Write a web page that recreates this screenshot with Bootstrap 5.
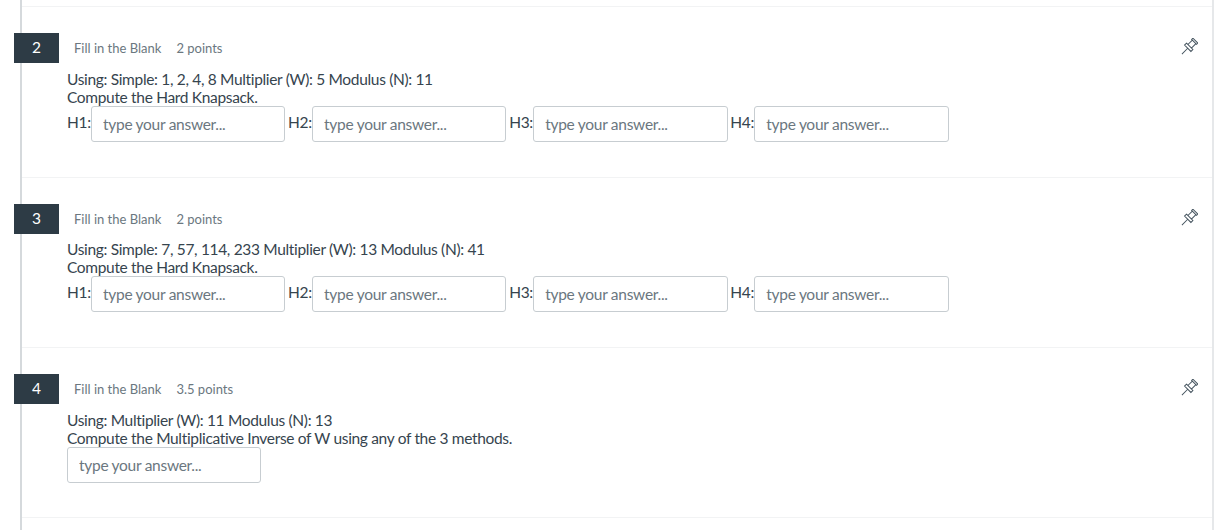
<!doctype html>
<html lang="en"><head><meta charset="utf-8"><title>Quiz</title>
<link href="https://cdn.jsdelivr.net/npm/bootstrap@5.3.0/dist/css/bootstrap.min.css" rel="stylesheet">
<style>
html,body{height:530px;overflow:hidden;background:#fff}
body{font-family:Lato,sans-serif;font-size:16px;color:#36444e}
.quiz-frame{margin-left:20px;margin-right:9px;height:530px;border-left:2px solid #d5d9dc;border-right:2px solid #e6e8ea}
.quiz-top{height:7px;border-bottom:1px solid #f2f3f4}
.quiz-item{height:170px;border-bottom:1px solid #f2f3f4;padding-top:26px}
.quiz-item:first-of-type{height:171px}
.quiz-num{width:45px;height:30px;margin-left:-8px;background:#2d3b45;color:#fff;font-size:15.5px}
.quiz-meta{font-size:13px;color:#6b7780;margin-left:15px;gap:15px;padding-top:2px}
.quiz-pin{margin-right:14px;margin-top:-2px}
.quiz-body{margin-left:45px;margin-top:7px;line-height:18px;font-size:15.5px;letter-spacing:-.33px}
.quiz-body-tight{margin-top:6px}
.quiz-label{width:24px;padding-top:7px;white-space:nowrap}
.quiz-input{width:194.35px;height:36px;padding:0 11px;margin-right:2.75px;font-family:Lato,sans-serif;font-size:15.5px;letter-spacing:-.28px;color:#2d3b45;border:1px solid #c7cdd1;border-radius:3px}
.quiz-input::placeholder{color:#6b7780;opacity:1}
</style></head><body>
<main class="quiz-frame">
<div class="quiz-top"></div>

<section class="quiz-item">
<div class="d-flex align-items-center">
<div class="quiz-num d-flex align-items-center justify-content-center">2</div>
<div class="quiz-meta d-flex"><span>Fill in the Blank</span><span>2 points</span></div>
<svg class="quiz-pin ms-auto" width="18" height="18" viewBox="-1 -1 18 18" fill="none" stroke="#44535e" stroke-width=".95" aria-hidden="true"><g transform="rotate(45 8 8)"><path d="M4.5-1h7v1.8h-7zM5.5.8h5V7h-5zM3.5 7h9v2.8h-9zM8 9.8V18"/></g></svg>
</div>
<div class="quiz-body">
<div>Using: Simple: 1, 2, 4, 8 Multiplier (W): 5 Modulus (N): 11</div>
<div>Compute the Hard Knapsack.</div>
<div class="d-flex">
<span class="quiz-label">H1:</span><input class="quiz-input form-control" placeholder="type your answer...">
<span class="quiz-label">H2:</span><input class="quiz-input form-control" placeholder="type your answer...">
<span class="quiz-label">H3:</span><input class="quiz-input form-control" placeholder="type your answer...">
<span class="quiz-label">H4:</span><input class="quiz-input form-control" placeholder="type your answer...">
</div></div>
</section>

<section class="quiz-item">
<div class="d-flex align-items-center">
<div class="quiz-num d-flex align-items-center justify-content-center">3</div>
<div class="quiz-meta d-flex"><span>Fill in the Blank</span><span>2 points</span></div>
<svg class="quiz-pin ms-auto" width="18" height="18" viewBox="-1 -1 18 18" fill="none" stroke="#44535e" stroke-width=".95" aria-hidden="true"><g transform="rotate(45 8 8)"><path d="M4.5-1h7v1.8h-7zM5.5.8h5V7h-5zM3.5 7h9v2.8h-9zM8 9.8V18"/></g></svg>
</div>
<div class="quiz-body quiz-body-tight">
<div>Using: Simple: 7, 57, 114, 233 Multiplier (W): 13 Modulus (N): 41</div>
<div>Compute the Hard Knapsack.</div>
<div class="d-flex">
<span class="quiz-label">H1:</span><input class="quiz-input form-control" placeholder="type your answer...">
<span class="quiz-label">H2:</span><input class="quiz-input form-control" placeholder="type your answer...">
<span class="quiz-label">H3:</span><input class="quiz-input form-control" placeholder="type your answer...">
<span class="quiz-label">H4:</span><input class="quiz-input form-control" placeholder="type your answer...">
</div></div>
</section>

<section class="quiz-item">
<div class="d-flex align-items-center">
<div class="quiz-num d-flex align-items-center justify-content-center">4</div>
<div class="quiz-meta d-flex"><span>Fill in the Blank</span><span>3.5 points</span></div>
<svg class="quiz-pin ms-auto" width="18" height="18" viewBox="-1 -1 18 18" fill="none" stroke="#44535e" stroke-width=".95" aria-hidden="true"><g transform="rotate(45 8 8)"><path d="M4.5-1h7v1.8h-7zM5.5.8h5V7h-5zM3.5 7h9v2.8h-9zM8 9.8V18"/></g></svg>
</div>
<div class="quiz-body">
<div>Using: Multiplier (W): 11 Modulus (N): 13</div>
<div>Compute the Multiplicative Inverse of W using any of the 3 methods.</div>
<div class="d-flex"><input class="quiz-input form-control" placeholder="type your answer..."></div>
</div>
</section>
</main>
<script src="https://cdn.jsdelivr.net/npm/bootstrap@5.3.0/dist/js/bootstrap.bundle.min.js"></script>
</body></html>
